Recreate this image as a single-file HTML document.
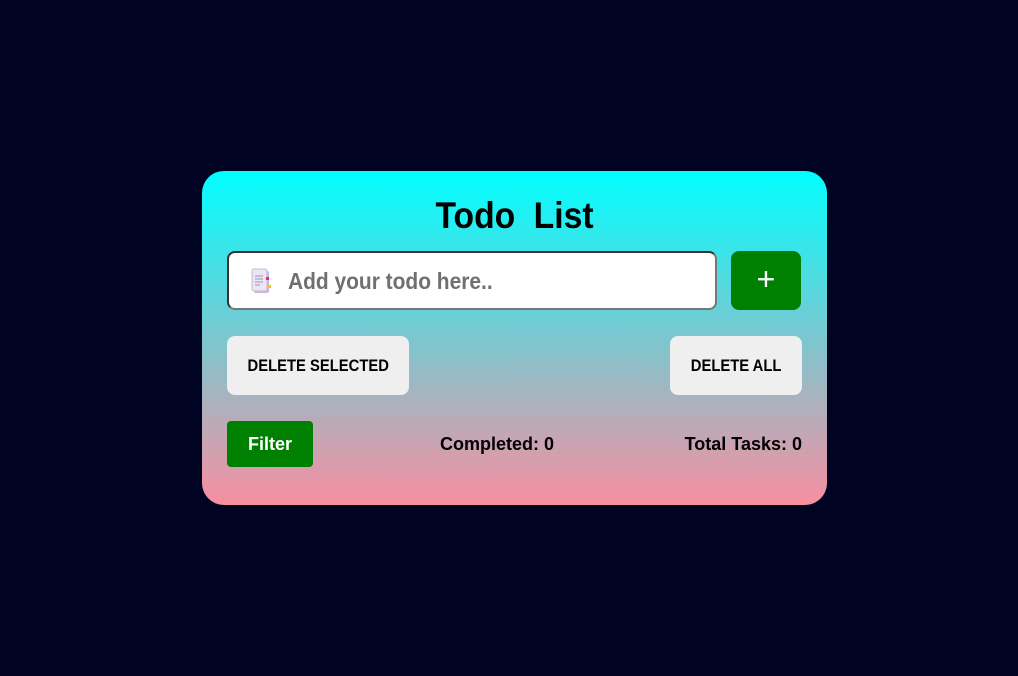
<!DOCTYPE html>
<html><head><meta charset="utf-8"><style>
*{margin:0;padding:0;box-sizing:border-box}
body{width:1018px;height:676px;background:#000321;font-family:"Liberation Sans",sans-serif;font-weight:bold;position:relative;overflow:hidden}
.card{position:absolute;left:202px;top:171px;width:625px;height:334px;border-radius:22px;background:linear-gradient(#00ffff,#f78fa0)}
h1{position:absolute;left:0;right:0;top:24px;text-align:center;font-size:37px;word-spacing:10px;color:#000;transform:scaleX(0.91)}
.inp{position:absolute;left:25px;top:80px;width:490px;height:59px;background:#fff;border:2px solid #333;border-bottom-color:#777;border-right-color:#777;border-radius:8px}
.inp span{position:absolute;left:59px;top:15px;font-size:23px;color:#707070;transform:scaleX(0.91);transform-origin:left}
.plus{position:absolute;left:529px;top:80px;width:70px;height:59px;background:#008000;border-radius:8px;color:#fff;font-size:32px;font-weight:normal;text-align:center;line-height:57px}
.btn{position:absolute;background:#efefef;border-radius:8px;font-size:17px;color:#000;text-align:center;line-height:59px;height:59px}
.btn span{display:inline-block;transform:scaleX(0.87)}
.filter{position:absolute;left:25px;top:250px;width:86px;height:46px;background:#008000;border-radius:4px;color:#fff;font-size:18px;text-align:center;line-height:46px}
.t{position:absolute;top:263px;font-size:18px;color:#000}
</style></head><body>
<div class="card">
<h1>Todo List</h1>
<div class="inp">
<svg style="position:absolute;left:22px;top:15px" width="22" height="27" viewBox="0 0 22 27"><rect x="3" y="3" width="15" height="22" rx="2" fill="#c9b8d8"/><rect x="1" y="1" width="15" height="22" rx="2" fill="#ece6f2" stroke="#c9b8d8"/><path d="M4 8h8M4 11h8M4 14h8M4 17h5" stroke="#a090b8" stroke-width="1"/><rect x="15" y="9" width="3" height="3" fill="#ff1493"/><rect x="17" y="17" width="3" height="3" fill="#ffc020"/></svg>
<span>Add your todo here..</span></div>
<div class="plus">+</div>
<div class="btn" style="left:25px;top:165px;width:182px"><span>DELETE SELECTED</span></div>
<div class="btn" style="left:468px;top:165px;width:132px"><span>DELETE ALL</span></div>
<div class="filter">Filter</div>
<div class="t" style="left:238px">Completed: 0</div>
<div class="t" style="right:25px">Total Tasks: 0</div>
</div>
</body></html>
